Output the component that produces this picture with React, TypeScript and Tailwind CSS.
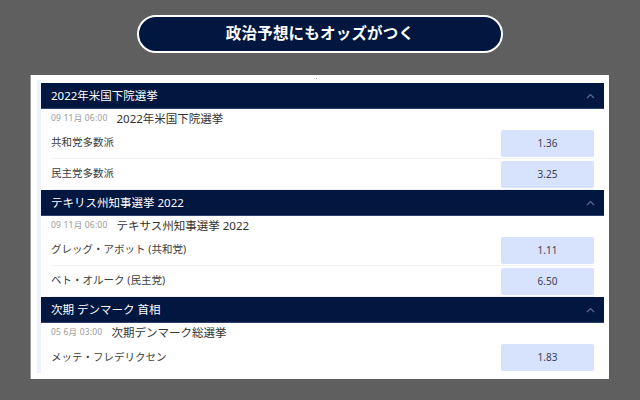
import React from "react";

type Runner = { name: string; odds: string };
type Market = {
  header: string;
  date: string;
  title: string;
  runners: Runner[];
};

const MARKETS: Market[] = [
  {
    header: "2022年米国下院選挙",
    date: "09 11月 06:00",
    title: "2022年米国下院選挙",
    runners: [
      { name: "共和党多数派", odds: "1.36" },
      { name: "民主党多数派", odds: "3.25" },
    ],
  },
  {
    header: "テキリス州知事選挙 2022",
    date: "09 11月 06:00",
    title: "テキサス州知事選挙 2022",
    runners: [
      { name: "グレッグ・アボット (共和党)", odds: "1.11" },
      { name: "ベト・オルーク (民主党)", odds: "6.50" },
    ],
  },
  {
    header: "次期 デンマーク 首相",
    date: "05 6月 03:00",
    title: "次期デンマーク総選挙",
    runners: [{ name: "メッテ・フレデリクセン", odds: "1.83" }],
  },
];

const FONT = "font-['Noto_Sans','Noto_Sans_CJK_JP',sans-serif]";

function Chevron() {
  return (
    <svg width="9" height="6" viewBox="0 0 9 6" className="shrink-0">
      <polyline points="1,5 4.5,1.5 8,5" fill="none" stroke="#5d6c8c" strokeWidth="1.2" />
    </svg>
  );
}

function MarketBlock({ market, last }: { market: Market; last: boolean }) {
  return (
    <div>
      {/* Kopfzeile */}
      <div className="h-[26px] flex items-center justify-between pl-[10px] pr-[9px] bg-[#011740] border-b border-[#2c4273]">
        <span className="text-[11.5px] text-white">{market.header}</span>
        <Chevron />
      </div>
      {/* Datum */}
      <div className="h-[19px] flex items-center gap-[9px] px-[10px]">
        <span className="text-[8.5px] text-[#9a9a9a] tracking-[0.2px]">{market.date}</span>
        <span className="text-[11.5px] text-[#333]">{market.title}</span>
      </div>
      {market.runners.map((r, i) => (
        <div
          key={i}
          className={`mx-[10px] h-[31px] flex items-center justify-between ${
            last && i === market.runners.length - 1 ? "" : "border-b border-[#f0f2f6]"
          }`}
        >
          <span className="text-[10.5px] text-[#3d3d3d]">{r.name}</span>
          <div className="w-[93px] h-[27px] rounded-[2px] bg-[#d7e2fd] flex items-center justify-center text-[10px] text-[#3b3f55]">
            {r.odds}
          </div>
        </div>
      ))}
    </div>
  );
}

export default function App() {
  return (
    <div className={`w-[640px] h-[400px] bg-[#5f5f5f] overflow-hidden ${FONT}`}>
      {/* Titel */}
      <div className="flex justify-center pt-[15px]">
        <div className="w-[366px] h-[38px] rounded-full border-2 border-white bg-[#011740] flex items-center justify-center">
          <span className="text-[15.5px] font-bold text-white tracking-[0.2px]">
            政治予想にもオッズがつく
          </span>
        </div>
      </div>

      {/* Panel */}
      <div className="relative mt-[22px] ml-[30px] w-[579px] h-[304px] bg-white border-l border-[#9a9a9a] pt-[5px] pl-[6px] pr-[5px]">
        <div className="absolute left-[285px] top-[3px] w-[1px] h-[1px] bg-[#999]" />
        <div className="flex h-[293px]">
          <div className="w-[4px] bg-[#eef2fc] shrink-0" />
          <div className="flex-1 pt-[3px]">
            {MARKETS.map((m, i) => (
              <MarketBlock key={i} market={m} last={i === MARKETS.length - 1} />
            ))}
          </div>
        </div>
      </div>
    </div>
  );
}
